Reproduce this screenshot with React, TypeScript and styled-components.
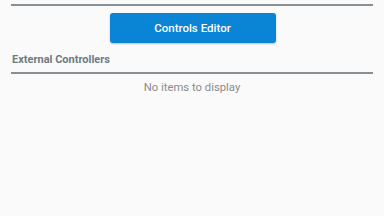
import React from "react";
import styled, { createGlobalStyle } from "styled-components";

const Global = createGlobalStyle`
  html, body { margin: 0; padding: 0; background: #fafafa; }
  body { font-family: Roboto, "Liberation Sans", sans-serif; }
`;

const Page = styled.div`
  width: 384px;
  height: 216px;
  background: #fafafa;
  padding: 4px 11px 0 11px;
  box-sizing: border-box;
  display: flex;
  flex-direction: column;
`;

const Divider = styled.div`
  height: 2px;
  background: #8a9196;
`;

const ButtonRow = styled.div`
  display: flex;
  justify-content: center;
  padding-top: 7px;
`;

const PrimaryButton = styled.button`
  width: 166px;
  height: 30px;
  margin-left: 1px;
  border: none;
  border-radius: 3px;
  background: #0a84d4;
  color: #ffffff;
  font-family: Roboto, "Liberation Sans", sans-serif;
  font-weight: 500;
  font-size: 11.5px;
  box-shadow: 0 1px 2px rgba(0, 0, 0, 0.25);
  padding: 0;
`;

const SectionTitle = styled.div`
  margin-top: 9px;
  padding-left: 1px;
  height: 16px;
  line-height: 16px;
  font-size: 11px;
  font-weight: 700;
  color: #6e7a83;
`;

const SectionDivider = styled(Divider)`
  margin-top: 4px;
`;

const Empty = styled.div`
  margin-top: 6px;
  text-align: center;
  font-size: 11.3px;
  color: #8b8b8b;
  line-height: 16px;
`;

export default function App() {
  return (
    <>
      <Global />
      <Page>
        <Divider />
        <ButtonRow>
          <PrimaryButton>Controls Editor</PrimaryButton>
        </ButtonRow>
        <SectionTitle>External Controllers</SectionTitle>
        <SectionDivider />
        <Empty>No items to display</Empty>
      </Page>
    </>
  );
}
